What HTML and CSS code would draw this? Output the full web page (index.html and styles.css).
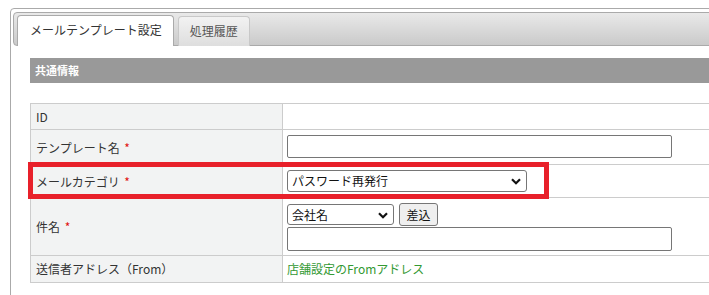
FILE: index.html
```html
<!DOCTYPE html>
<html lang="ja">
<head>
<meta charset="utf-8">
<title>メールテンプレート設定</title>
<link rel="stylesheet" href="styles.css">
</head>
<body>
<div class="panel">
  <div class="tabbar">
    <div class="tab tab-active">メールテンプレート設定</div>
    <div class="tab">処理履歴</div>
  </div>
  <div class="content">
    <div class="section-head">共通情報</div>
    <div class="table-wrap">
      <table class="form-table">
        <tr class="row-id">
          <th>ID</th>
          <td></td>
        </tr>
        <tr class="row-input">
          <th>テンプレート名 <span class="req">*</span></th>
          <td><input type="text" class="text-input"></td>
        </tr>
        <tr class="row-select">
          <th>メールカテゴリ <span class="req">*</span></th>
          <td>
            <span class="select-wrap select-wide">
              <select class="select"><option>パスワード再発行</option></select>
              <svg class="chev" width="10" height="7" viewBox="0 0 10 7"><path d="M1 1.2 L5 5.2 L9 1.2" fill="none" stroke="#111" stroke-width="2.2"/></svg>
            </span>
          </td>
        </tr>
        <tr class="row-subject">
          <th>件名 <span class="req">*</span></th>
          <td>
            <div class="subject-tools">
              <span class="select-wrap select-small">
                <select class="select"><option>会社名</option></select>
                <svg class="chev" width="10" height="7" viewBox="0 0 10 7"><path d="M1 1.2 L5 5.2 L9 1.2" fill="none" stroke="#111" stroke-width="2.2"/></svg>
              </span>
              <button class="btn" type="button">差込</button>
            </div>
            <input type="text" class="text-input text-input-b">
          </td>
        </tr>
        <tr class="row-from">
          <th>送信者アドレス（From）</th>
          <td><span class="green">店舗設定のFromアドレス</span></td>
        </tr>
      </table>
      <div class="highlight"></div>
    </div>
  </div>
</div>
</body>
</html>
```

FILE: styles.css
```css
html, body {
  overflow: hidden;
}
body {
  margin: 8px 0 0 10px;
  background: #fff;
  font-family: "Noto Sans CJK JP", "Noto Sans", sans-serif;
  font-size: 12px;
  color: #333;
}
.panel {
  width: 760px;
  height: 300px;
  border: 1px solid #aaa;
  border-radius: 4px;
  padding: 3px 2px;
  box-sizing: border-box;
}
.tabbar {
  height: 34px;
  box-sizing: border-box;
  border: 1px solid #aaa;
  border-radius: 4px;
  background: linear-gradient(#e9e9e9, #cacaca);
  display: flex;
  align-items: flex-end;
  gap: 4px;
  padding: 3px 3px 0;
}
.tab {
  height: 30px;
  margin-bottom: -1px;
  box-sizing: border-box;
  border: 1px solid #c8c8c8;
  border-bottom: none;
  border-radius: 4px 4px 0 0;
  background: linear-gradient(#f2f2f2, #dedede);
  color: #555;
  line-height: 27px;
  padding: 0 11px;
  font-size: 12px;
}
.tab-active {
  background: #fff;
  border-color: #aaa;
  color: #333;
  height: 31px;
  padding: 0 11px 0 12px;
}
.content {
  padding: 12px 0 0 17px;
}
.section-head {
  background: #999;
  color: #fff;
  font-weight: bold;
  font-size: 11px;
  height: 25px;
  line-height: 24px;
  padding-left: 5px;
}
.table-wrap {
  position: relative;
  margin-top: 20px;
}
.form-table {
  border-collapse: collapse;
  width: 740px;
}
.form-table th,
.form-table td {
  border: 1px solid #ccc;
  padding: 4px 4px;
  line-height: 17px;
  vertical-align: middle;
  text-align: left;
}
.form-table th {
  width: 242px;
  background: #f2f3f3;
  font-weight: normal;
  padding-left: 5px;
  color: #333;
}
.row-input td { padding: 5px 4px 6px; }
.row-select td { padding: 5px 4px 5px; }
.row-subject td { padding: 5px 4px 4px; }
.row-from td, .row-from th { padding-top: 4px; padding-bottom: 5px; }
.req {
  color: #e01010;
  margin-left: 2px;
}
.text-input {
  display: block;
  width: 385px;
  height: 23px;
  box-sizing: border-box;
  border: 1px solid #767676;
  border-radius: 2px;
  margin: 0;
  padding: 0 4px;
  font: inherit;
}
.text-input-b {
  height: 24px;
  margin-top: 1px;
}
.select-wrap {
  position: relative;
  display: inline-block;
  vertical-align: top;
}
.select {
  -webkit-appearance: none;
  appearance: none;
  display: block;
  box-sizing: border-box;
  border: 1px solid #767676;
  border-radius: 3px;
  background: #fff;
  font-family: "Noto Sans CJK JP", "Noto Sans", sans-serif;
  font-size: 12px;
  color: #111;
  margin: 0;
  padding: 0 20px 0 4px;
  line-height: 18px;
}
.select-wide .select {
  width: 240px;
  height: 22px;
}
.select-small {
  margin-top: 1px;
}
.select-small .select {
  width: 107px;
  height: 21px;
}
.chev {
  position: absolute;
  right: 6px;
  top: 50%;
  margin-top: -3px;
  pointer-events: none;
}
.subject-tools {
  display: flex;
  align-items: flex-start;
  gap: 5px;
}
.btn {
  height: 23px;
  width: 39px;
  box-sizing: border-box;
  border: 1px solid #767676;
  border-radius: 3px;
  background: #efefef;
  font-family: "Noto Sans CJK JP", "Noto Sans", sans-serif;
  font-size: 12px;
  color: #111;
  padding: 0;
  margin: 0;
}
.green {
  color: #339933;
}
.highlight {
  position: absolute;
  left: -2px;
  top: 59px;
  width: 521px;
  height: 37px;
  box-sizing: border-box;
  border: 5px solid #e8202a;
  pointer-events: none;
}
```
